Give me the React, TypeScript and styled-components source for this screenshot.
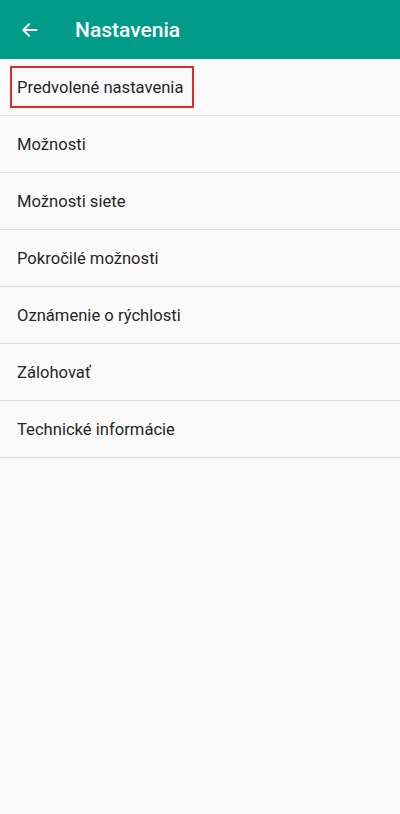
import React, { FC } from "react";
import styled, { createGlobalStyle } from "styled-components";

const GlobalStyle = createGlobalStyle`
  html, body {
    margin: 0;
    padding: 0;
    background: #fafafa;
    font-family: Roboto, "Noto Sans", Arial, sans-serif;
  }
  * { box-sizing: border-box; }
`;

const Page = styled.div`
  width: 400px;
  min-height: 814px;
  background: #fafafa;
`;

const Toolbar = styled.header`
  display: flex;
  align-items: center;
  height: 59px;
  background: #009b89;
  color: #ffffff;
  padding-left: 20px;
`;

const BackButton = styled.div`
  display: flex;
  align-items: center;
  width: 20px;
  height: 20px;
  margin-right: 35px;
`;

const Title = styled.h1`
  margin: 0;
  font-size: 21px;
  font-weight: 500;
`;

const List = styled.ul`
  margin: 0;
  padding: 0;
  list-style: none;
`;

const Row = styled.li`
  display: flex;
  align-items: center;
  height: 57px;
  padding-left: 10px;
  border-bottom: 1px solid #dcdcdc;
`;

const Label = styled.span<{ $focused?: boolean }>`
  display: flex;
  align-items: center;
  height: 42px;
  padding: 0 9px 0 5px;
  border: 2px solid ${(props) => (props.$focused ? "#e32a2a" : "transparent")};
  font-size: 16.6px;
  color: #262626;
`;

const items = [
  "Predvolené nastavenia",
  "Možnosti",
  "Možnosti siete",
  "Pokročilé možnosti",
  "Oznámenie o rýchlosti",
  "Zálohovať",
  "Technické informácie",
];

const App: FC = () => {
  return (
    <Page>
      <GlobalStyle />
      <Toolbar>
        <BackButton>
          <svg width="20" height="20" viewBox="0 0 24 24" fill="none">
            <path
              d="M20 12H4.5M11 5l-7 7 7 7"
              stroke="#ffffff"
              strokeWidth="2.4"
              strokeLinecap="round"
              strokeLinejoin="round"
            />
          </svg>
        </BackButton>
        <Title>Nastavenia</Title>
      </Toolbar>
      <List>
        {items.map((item, i) => (
          <Row key={item}>
            <Label $focused={i === 0}>{item}</Label>
          </Row>
        ))}
      </List>
    </Page>
  );
};

export default App;
